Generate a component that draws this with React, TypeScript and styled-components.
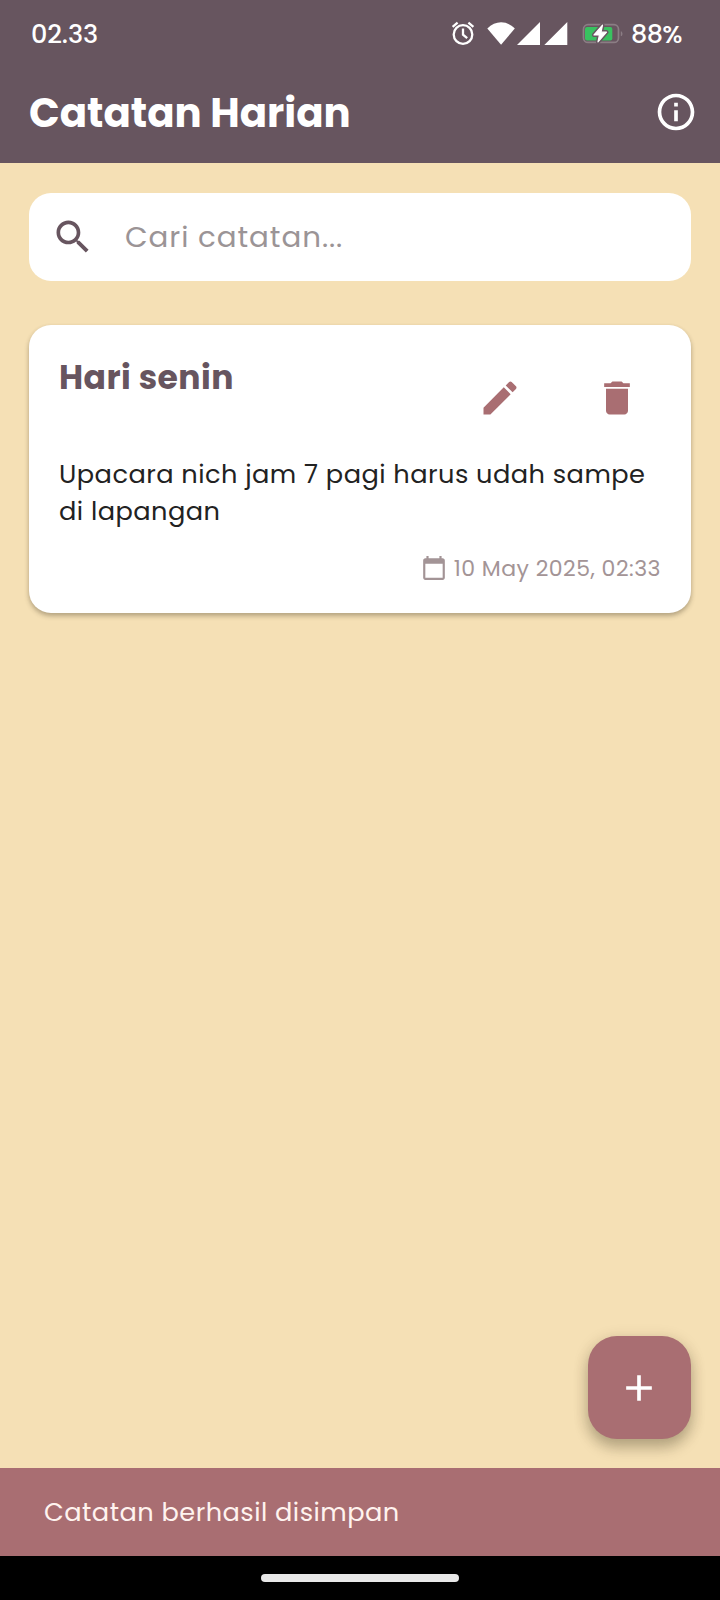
import React from 'react';
import styled, { createGlobalStyle } from 'styled-components';

const colors = {
  plum: '#67555f',
  sand: '#f5e0b5',
  rose: '#a96e72',
  muted: '#a39496',
};

const GlobalStyle = createGlobalStyle`
  * { box-sizing: border-box; }
  body { margin: 0; }
  button { border: 0; padding: 0; background: none; font: inherit; color: inherit; display: block; }
  svg { display: block; flex: none; }
`;

const Screen = styled.div`
  position: relative;
  width: 720px;
  height: 1600px;
  display: flex;
  flex-direction: column;
  background: ${colors.sand};
  font-family: Poppins, Inter, 'Open Sans', sans-serif;
  overflow: hidden;
`;

const StatusBar = styled.div`
  height: 66px;
  padding: 2px 37px 0 31px;
  display: flex;
  align-items: center;
  justify-content: space-between;
  background: ${colors.plum};
  color: #fff;
`;

const StatusText = styled.span<{ $spacing: number }>`
  font-size: 25.5px;
  font-weight: 500;
  line-height: 30px;
  letter-spacing: ${(p) => p.$spacing}px;
`;

const StatusIcons = styled.div`
  display: flex;
  align-items: center;
`;

const Glyphs = styled.svg`
  width: 172px;
  height: 28px;
`;

const BatteryLevel = styled.div`
  width: 60px;
  padding-left: 8px;
`;

const AppBar = styled.header`
  height: 97px;
  padding: 0 22px 5px 29px;
  display: flex;
  align-items: center;
  justify-content: space-between;
  background: ${colors.plum};
  color: #fff;
`;

const AppTitle = styled.h1`
  margin: 0;
  padding-top: 2px;
  font-size: 40.3px;
  font-weight: 700;
  line-height: 50px;
  white-space: nowrap;
`;

const Content = styled.main`
  flex: 1;
  padding: 30px 29px 0;
`;

const SearchField = styled.div`
  height: 88px;
  padding: 0 22px;
  display: flex;
  align-items: center;
  gap: 30px;
  border-radius: 22px;
  background: #fff;
  color: ${colors.plum};
`;

const Placeholder = styled.span`
  font-size: 29.33px;
  line-height: 40px;
  letter-spacing: 0.92px;
  color: #9b9496;
`;

const NoteCard = styled.article`
  height: 287.5px;
  margin-top: 44px;
  padding: 30px 30px 0 30px;
  border-radius: 22px;
  background: #fff;
  box-shadow: 0 3px 5px rgba(60, 50, 30, 0.32), 0 1px 4px rgba(60, 50, 30, 0.06);
`;

const NoteHeader = styled.div`
  height: 88px;
  display: flex;
  justify-content: space-between;
`;

const NoteTitle = styled.h2`
  margin: 0;
  font-size: 33px;
  font-weight: 700;
  line-height: 46px;
  letter-spacing: 0.46px;
  color: ${colors.plum};
`;

const NoteActions = styled.div`
  display: flex;
  align-items: flex-start;
  gap: 73px;
  padding: 21px 22px 0 0;
  color: ${colors.rose};
`;

const NoteText = styled.p`
  margin: 13px 0 0;
  height: 74px;
  font-size: 25.67px;
  line-height: 37px;
  letter-spacing: 0.46px;
  color: #222;
  white-space: nowrap;
`;

const NoteDate = styled.div`
  margin-top: 21px;
  height: 34px;
  display: flex;
  align-items: center;
  justify-content: flex-end;
  gap: 7px;
  color: ${colors.muted};
  font-size: 22px;
  line-height: 34px;
  letter-spacing: 0.46px;
  white-space: nowrap;
`;

const DateText = styled.span`
  padding-top: 2px;
`;

const AddButton = styled.button`
  position: absolute;
  left: 588px;
  top: 1336px;
  width: 103px;
  height: 103px;
  padding: 0 1px 0 0;
  display: flex;
  align-items: center;
  justify-content: center;
  border-radius: 29px;
  background: ${colors.rose};
  color: #fff;
  box-shadow: 0 9px 14px rgba(60, 50, 30, 0.27), 0 3px 16px rgba(60, 50, 30, 0.16);
`;

const Snackbar = styled.div`
  position: relative;
  height: 88px;
  padding: 1px 0 0 44px;
  display: flex;
  align-items: center;
  background: ${colors.rose};
  color: #fff3ef;
  font-size: 25.67px;
  letter-spacing: 0.46px;
  white-space: nowrap;
`;

const NavigationBar = styled.div`
  height: 44px;
  padding-bottom: 1px;
  display: flex;
  align-items: center;
  justify-content: center;
  background: #000;
`;

const HomeHandle = styled.div`
  width: 198px;
  height: 8px;
  border-radius: 4px;
  background: #e8e8e8;
`;

function Icon({ path, size = 44 }: { path: string; size?: number }) {
  return (
    <svg width={size} height={size} viewBox="0 0 24 24" fill="currentColor">
      <path d={path} />
    </svg>
  );
}

const icons = {
  info: 'M11 7h2v2h-2zm0 4h2v6h-2zm1-9C6.48 2 2 6.48 2 12s4.48 10 10 10 10-4.48 10-10S17.52 2 12 2zm0 18c-4.41 0-8-3.59-8-8s3.59-8 8-8 8 3.59 8 8-3.59 8-8 8z',
  search:
    'M15.5 14h-.79l-.28-.27C15.41 12.59 16 11.11 16 9.5 16 5.91 13.09 3 9.5 3S3 5.91 3 9.5 5.91 16 9.5 16c1.61 0 3.09-.59 4.23-1.57l.27.28v.79l5 4.99L20.49 19l-4.99-5zm-6 0C7.01 14 5 11.99 5 9.5S7.01 5 9.5 5 14 7.01 14 9.5 11.99 14 9.5 14z',
  edit: 'M3 17.25V21h3.75L17.81 9.94l-3.75-3.75L3 17.25zM20.71 7.04c.39-.39.39-1.02 0-1.41l-2.34-2.34c-.39-.39-1.02-.39-1.41 0l-1.83 1.83 3.75 3.75 1.83-1.83z',
  trash: 'M6 19c0 1.1.9 2 2 2h8c1.1 0 2-.9 2-2V7H6v12zM19 4h-3.5l-1-1h-5l-1 1H5v2h14V4z',
  calendar:
    'M20 3h-1V1h-2v2H7V1H5v2H4c-1.1 0-2 .9-2 2v16c0 1.1.9 2 2 2h16c1.1 0 2-.9 2-2V5c0-1.1-.9-2-2-2zm0 18H4V8h16v13z',
  add: 'M19 13h-6v6h-2v-6H5v-2h6V5h2v6h6v2z',
};

function StatusGlyphs() {
  return (
    <Glyphs viewBox="451 20 172 28" fill="none">
      <g stroke="#fff" strokeWidth="2.3">
        <circle cx="463" cy="34.5" r="9.3" />
        <path d="M463 28.5v6.2l4.2 3.5M452.6 26.8l5-4.2M468.4 22.6l5 4.2" />
      </g>
      <path d="M487.3 28.5C495.5 20.2 506.6 20.2 514.8 28.5L501.05 44.8Z" fill="#fff" />
      <path d="M517 45L540 22V45ZM544.3 45L567.3 22V45Z" fill="#fff" />
      <rect x="583.5" y="24.7" width="35" height="17.7" rx="4.5" stroke="#8b7d84" strokeWidth="1.7" />
      <path d="M620.8 31.2c2.2.5 2.2 4.6 0 5.1z" fill="#8b7d84" />
      <rect x="585" y="27" width="27.3" height="13.4" rx="2" fill="#39c160" />
      <path
        d="M602.5 25.2L594 35H599.4L598 41.8L606.5 32.2H601Z"
        fill="#fff"
        stroke={colors.plum}
        strokeWidth="4.2"
        strokeLinejoin="round"
      />
      <path
        d="M602.5 25.2L594 35H599.4L598 41.8L606.5 32.2H601Z"
        fill="#fff"
        stroke="#fff"
        strokeWidth="1.2"
        strokeLinejoin="round"
      />
    </Glyphs>
  );
}

export default function App() {
  return (
    <Screen>
      <GlobalStyle />
      <StatusBar>
        <StatusText $spacing={-0.1}>02.33</StatusText>
        <StatusIcons>
          <StatusGlyphs />
          <BatteryLevel>
            <StatusText $spacing={-0.6}>88%</StatusText>
          </BatteryLevel>
        </StatusIcons>
      </StatusBar>
      <AppBar>
        <AppTitle>Catatan Harian</AppTitle>
        <button aria-label="Info">
          <Icon path={icons.info} />
        </button>
      </AppBar>
      <Content>
        <SearchField>
          <Icon path={icons.search} />
          <Placeholder>Cari catatan...</Placeholder>
        </SearchField>
        <NoteCard>
          <NoteHeader>
            <NoteTitle>Hari senin</NoteTitle>
            <NoteActions>
              <button aria-label="Edit">
                <Icon path={icons.edit} />
              </button>
              <button aria-label="Hapus">
                <Icon path={icons.trash} />
              </button>
            </NoteActions>
          </NoteHeader>
          <NoteText>
            Upacara nich jam 7 pagi harus udah sampe
            <br />
            di lapangan
          </NoteText>
          <NoteDate>
            <Icon path={icons.calendar} size={26} />
            <DateText>10 May 2025, 02:33</DateText>
          </NoteDate>
        </NoteCard>
      </Content>
      <AddButton aria-label="Tambah">
        <Icon path={icons.add} />
      </AddButton>
      <Snackbar>Catatan berhasil disimpan</Snackbar>
      <NavigationBar>
        <HomeHandle />
      </NavigationBar>
    </Screen>
  );
}
